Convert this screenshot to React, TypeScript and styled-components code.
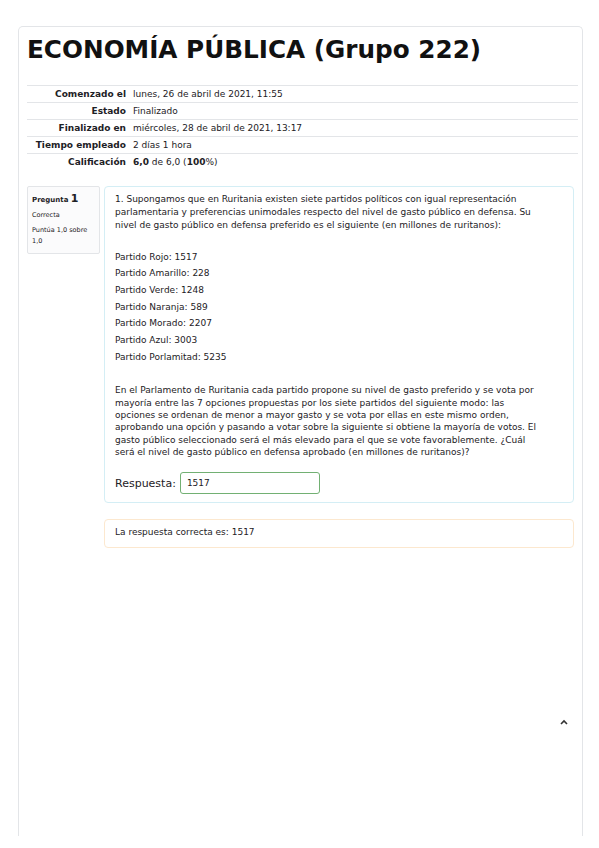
import React from "react";
import styled, { createGlobalStyle } from "styled-components";

const GlobalStyle = createGlobalStyle`
  body {
    margin: 0;
    background: #ffffff;
    font-family: "DejaVu Sans", Verdana, sans-serif;
    color: #1d2125;
  }
`;

const Page = styled.div`
  padding: 26px 16px 0 18px;
`;

const Card = styled.div`
  position: relative;
  height: 809px;
  border: 1px solid #e3e5e8;
  border-bottom: none;
  border-radius: 5px 5px 0 0;
  padding: 0 4px 0 8px;
`;

const Title = styled.h1`
  margin: 0;
  padding-top: 6px;
  font-size: 24.7px;
  font-weight: bold;
  line-height: 34px;
  color: #111;
`;

const Summary = styled.table`
  width: 100%;
  margin-top: 18px;
  border-collapse: collapse;
  font-size: 9px;
`;

const SummaryRow = styled.tr<{ $last?: boolean }>`
  border-top: 1px solid ${(p) => (p.$last ? "transparent" : "#e3e5e8")};
  height: 17px;
`;

const Label = styled.th`
  width: 99px;
  padding: 0 7px 0 0;
  text-align: right;
  font-weight: bold;
  white-space: nowrap;
`;

const Value = styled.td`
  padding: 0;
  text-align: left;
  font-weight: normal;
`;

const Question = styled.div`
  display: flex;
  gap: 4px;
  margin-top: 15px;
  padding-right: 4px;
  align-items: flex-start;
`;

const Info = styled.div`
  width: 63px;
  flex-shrink: 0;
  padding: 6px 4px 6px 4px;
  background: #fbfbfc;
  border: 1px solid #e3e5e8;
  border-radius: 2px;
  font-size: 6.5px;
  line-height: 12px;
`;

const QNumber = styled.div`
  font-weight: bold;
  font-size: 7px;
  span {
    font-size: 11px;
  }
`;

const InfoLine = styled.div`
  margin-top: 4px;
  line-height: 11px;
`;

const Content = styled.div`
  flex: 1;
  display: flex;
  flex-direction: column;
  gap: 16px;
`;

const Formulation = styled.div`
  border: 1px solid #d4eef5;
  border-radius: 4px;
  padding: 6px 10px 8px 10px;
  font-size: 9px;
  white-space: nowrap;
`;

const Paragraph = styled.p<{ $lh: number }>`
  margin: 0;
  line-height: ${(p) => p.$lh}px;
`;

const Parties = styled.div`
  margin: 17px 0 19px;
  p {
    margin: 0;
    line-height: 16.7px;
  }
`;

const Answer = styled.div`
  display: flex;
  align-items: center;
  gap: 4px;
  margin-top: 14px;
  font-size: 11px;
`;

const AnswerInput = styled.div`
  width: 132px;
  height: 20px;
  border: 1px solid #72b073;
  border-radius: 3px;
  padding-left: 6px;
  display: flex;
  align-items: center;
  font-size: 9px;
`;

const Feedback = styled.div`
  border: 1px solid #fce8cf;
  border-radius: 4px;
  padding: 6px 10px 9px;
  font-size: 9px;
  line-height: 12px;
`;

const TopButton = styled.div`
  position: absolute;
  left: 540px;
  top: 690px;
  width: 10px;
  height: 10px;
  display: flex;
  align-items: center;
  justify-content: center;
`;

const summary = [
  { label: "Comenzado el", value: "lunes, 26 de abril de 2021, 11:55" },
  { label: "Estado", value: "Finalizado" },
  { label: "Finalizado en", value: "miércoles, 28 de abril de 2021, 13:17" },
  { label: "Tiempo empleado", value: "2 días 1 hora" },
];

const parties = [
  "Partido Rojo: 1517",
  "Partido Amarillo: 228",
  "Partido Verde: 1248",
  "Partido Naranja: 589",
  "Partido Morado: 2207",
  "Partido Azul: 3003",
  "Partido Porlamitad: 5235",
];

const intro = [
  "1. Supongamos que en Ruritania existen siete partidos políticos con igual representación",
  "parlamentaria y preferencias unimodales respecto del nivel de gasto público en defensa. Su",
  "nivel de gasto público en defensa preferido es el siguiente (en millones de ruritanos):",
];

const rule = [
  "En el Parlamento de Ruritania cada partido propone su nivel de gasto preferido y se vota por",
  "mayoría entre las 7 opciones propuestas por los siete partidos del siguiente modo: las",
  "opciones se ordenan de menor a mayor gasto y se vota por ellas en este mismo orden,",
  "aprobando una opción y pasando a votar sobre la siguiente si obtiene la mayoría de votos. El",
  "gasto público seleccionado será el más elevado para el que se vote favorablemente. ¿Cuál",
  "será el nivel de gasto público en defensa aprobado (en millones de ruritanos)?",
];

const lines = (list: string[]) =>
  list.map((l, i) => (
    <React.Fragment key={i}>
      {l}
      {i < list.length - 1 && <br />}
    </React.Fragment>
  ));

export default function App() {
  return (
    <>
      <GlobalStyle />
      <Page>
        <Card>
          <Title>ECONOMÍA PÚBLICA (Grupo 222)</Title>
          <Summary>
            <tbody>
              {summary.map((row) => (
                <SummaryRow key={row.label}>
                  <Label>{row.label}</Label>
                  <Value>{row.value}</Value>
                </SummaryRow>
              ))}
              <SummaryRow>
                <Label>Calificación</Label>
                <Value>
                  <b>6,0</b> de 6,0 (<b>100</b>%)
                </Value>
              </SummaryRow>
            </tbody>
          </Summary>
          <Question>
            <Info>
              <QNumber>
                Pregunta <span>1</span>
              </QNumber>
              <InfoLine>Correcta</InfoLine>
              <InfoLine>Puntúa 1,0 sobre 1,0</InfoLine>
            </Info>
            <Content>
              <Formulation>
                <Paragraph $lh={13}>{lines(intro)}</Paragraph>
                <Parties>
                  {parties.map((p) => (
                    <p key={p}>{p}</p>
                  ))}
                </Parties>
                <Paragraph $lh={12.3}>{lines(rule)}</Paragraph>
                <Answer>
                  Respuesta:
                  <AnswerInput>1517</AnswerInput>
                </Answer>
              </Formulation>
              <Feedback>La respuesta correcta es: 1517</Feedback>
            </Content>
          </Question>
          <TopButton>
            <svg width="8" height="6" viewBox="0 0 8 6">
              <path d="M1 5 L4 2 L7 5" fill="none" stroke="#333" strokeWidth="1.6" />
            </svg>
          </TopButton>
        </Card>
      </Page>
    </>
  );
}
